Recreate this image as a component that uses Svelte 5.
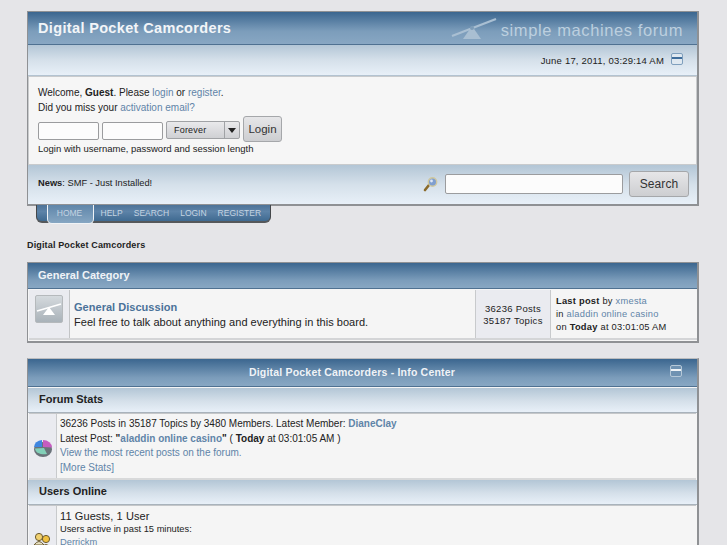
<script>
  let tabs = ['HELP', 'SEARCH', 'LOGIN', 'REGISTER']
</script>

<div class="page">
  <div class="frame head">
    <div class="titlebar">
      <h1>Digital Pocket Camcorders</h1>
      <div class="logo">
        <svg width="48" height="22" viewBox="0 0 48 22">
          <path d="M1 18 L45 1" stroke="#a9bfd2" stroke-width="2.2" fill="none" />
          <path d="M21 8 L12 21 L30 21 Z" fill="#a9bfd2" />
          <circle cx="21" cy="10" r="2" fill="#7d9cb8" />
        </svg>
        <span>simple machines forum</span>
      </div>
    </div>
    <div class="datebar">
      <span>June 17, 2011, 03:29:14 AM</span>
      <span class="collapse"></span>
    </div>
    <div class="welcome">
      <p>Welcome, <b>Guest</b>. Please <a href="#a">login</a> or <a href="#a">register</a>.</p>
      <p>Did you miss your <a href="#a">activation email?</a></p>
      <div class="loginrow">
        <span class="field short"></span>
        <span class="field short"></span>
        <span class="select">Forever<i><em></em></i></span>
        <span class="btn login">Login</span>
      </div>
      <p class="hint">Login with username, password and session length</p>
    </div>
    <div class="newsbar">
      <p><b>News</b>: SMF - Just Installed!</p>
      <div class="searchbox">
        <svg width="16" height="16" viewBox="0 0 16 16">
          <path d="M6 9 L2 14" stroke="#8a6a2a" stroke-width="2.6" stroke-linecap="round" />
          <circle cx="9.5" cy="6" r="4.2" fill="#7f9fd0" stroke="#d0c8a0" stroke-width="1.4" />
          <circle cx="8.5" cy="5" r="1.4" fill="#dfe8f6" />
        </svg>
        <span class="field wide"></span>
        <span class="btn search">Search</span>
      </div>
    </div>
  </div>

  <nav class="tabs">
    <span class="tab active">HOME</span>
    {#each tabs as t}
      <span class="tab">{t}</span>
    {/each}
  </nav>

  <div class="crumb">Digital Pocket Camcorders</div>

  <div class="frame cat">
    <div class="catbar">General Category</div>
    <div class="board">
      <div class="iconcell">
        <span class="boardicon">
          <svg width="26" height="14" viewBox="0 0 26 14">
            <path d="M1 9 L25 2" stroke="#fff" stroke-width="1.6" />
            <path d="M13 5 L7 13 L19 13 Z" fill="#fff" />
          </svg>
        </span>
      </div>
      <div class="info">
        <a href="#a" class="boardname">General Discussion</a>
        <p>Feel free to talk about anything and everything in this board.</p>
      </div>
      <div class="stats">
        <span>36236 Posts</span>
        <span>35187 Topics</span>
      </div>
      <div class="lastpost">
        <p><b>Last post</b> by <a href="#a">xmesta</a></p>
        <p>in <a href="#a">aladdin online casino</a></p>
        <p>on <b>Today</b> at 03:01:05 AM</p>
      </div>
    </div>
  </div>

  <div class="frame center">
    <div class="centerbar">
      <span>Digital Pocket Camcorders - Info Center</span>
      <span class="collapse dark"></span>
    </div>
    <div class="subbar">Forum Stats</div>
    <div class="row stat">
      <div class="side">
        <svg width="20" height="18" viewBox="0 0 20 18">
          <ellipse cx="10" cy="10.5" rx="9" ry="7.5" fill="#6a737a" />
          <path d="M10 8 L10 1 A9 7.5 0 0 1 19 8.5 Z" fill="#c65cc0" />
          <path d="M9 8 L1 8 A9 7 0 0 1 9 1 Z" fill="#3f86e0" />
          <path d="M11 9 L2 9.500 A9 6 0 0 0 14 15 Z" fill="#82d0b8" />
        </svg>
      </div>
      <div class="text">
        <p>36236 Posts in 35187 Topics by 3480 Members. Latest Member: <a href="#a"><b>DianeClay</b></a></p>
        <p>Latest Post: <b>"<a href="#a">aladdin online casino</a>"</b> ( <b>Today</b> at 03:01:05 AM )</p>
        <p><a href="#a">View the most recent posts on the forum.</a></p>
        <p><a href="#a">[More Stats]</a></p>
      </div>
    </div>
    <div class="subbar second">Users Online</div>
    <div class="row users">
      <div class="side">
        <svg width="20" height="18" viewBox="0 0 20 18">
          <circle cx="6" cy="5" r="3.600" fill="#f0d070" stroke="#6a5a30" />
          <path d="M1 13 Q6 6 11 13 Z" fill="#e8e0c0" stroke="#6a5a30" />
          <circle cx="13" cy="7" r="3.600" fill="#f0c040" stroke="#6a5a30" />
          <path d="M7 17 Q13 8 19 17 Z" fill="#d8d8d0" stroke="#6a5a30" />
        </svg>
      </div>
      <div class="text">
        <p class="big">11 Guests, 1 User</p>
        <p class="small">Users active in past 15 minutes:</p>
        <p class="small"><a href="#a">Derrickm</a></p>
      </div>
    </div>
  </div>
</div>

<style>
  :global(html), :global(body) {
    margin: 0;
    overflow: hidden;
  }

  .page {
    box-sizing: border-box;
    height: 545px;
    overflow: hidden;
    padding: 11px 28px 0 27px;
    background: #e5e5e8;
    font-family: "Liberation Sans", Arial, sans-serif;
    font-size: 10px;
    color: #222;
  }

  p {
    margin: 0;
  }

  a {
    color: #5f84a8;
    text-decoration: none;
  }

  .frame {
    border: 1px solid #8f9194;
    border-right-width: 2px;
    border-bottom-width: 2px;
    background: #f5f5f5;
  }

  .titlebar {
    display: flex;
    justify-content: space-between;
    align-items: center;
    height: 32px;
    padding: 0 14px 0 10px;
    background: linear-gradient(#3b668f, #7c9dbb 60%, #88a7c3);
    border-bottom: 1px solid #4f7191;
  }

  h1 {
    margin: 0;
    font-size: 14.500px;
    letter-spacing: 0.35px;
    color: #f2f5f8;
  }

  .logo {
    display: flex;
    align-items: center;
    gap: 2px;
    padding-top: 5px;
    color: #bccfdf;
    font-size: 16.500px;
    letter-spacing: 0.6px;
  }

  .logo svg {
    margin-top: -4px;
  }

  .datebar {
    display: flex;
    justify-content: flex-end;
    align-items: center;
    gap: 7px;
    height: 30px;
    padding-right: 14px;
    background: linear-gradient(#b3c6d6, #d5e0ea 50%, #e8f0f8);
    border-bottom: 1px solid #b3c3d1;
    font-size: 9.500px;
    letter-spacing: 0.2px;
  }

  .collapse {
    box-sizing: border-box;
    width: 12px;
    height: 12px;
    margin-top: -3px;
    border: 1px solid #7f9fbd;
    border-radius: 2px;
    background: linear-gradient(#dfe8f0 30%, #3f6d9b 30%, #3f6d9b 55%, #dfe8f0 55%);
  }

  .collapse.dark {
    margin: 0;
    background: linear-gradient(#6f92b2 35%, #eef3f7 35%, #eef3f7 55%, #6f92b2 55%);
    border-color: #b5c8d8;
  }

  .welcome {
    box-sizing: border-box;
    height: 89px;
    padding: 8px 9px 0 9px;
    border: 1px solid #c9cbcd;
    background: #f6f6f6;
    font-size: 10px;
    line-height: 15px;
  }

  .loginrow {
    display: flex;
    align-items: flex-start;
    gap: 3px;
    margin-top: 1px;
    height: 27px;
  }

  .field {
    box-sizing: border-box;
    display: block;
    margin-top: 6px;
    height: 18px;
    border: 1px solid #9b9c9e;
    border-radius: 2px;
    background: #fcfcfc;
  }

  .field.short {
    width: 61px;
  }

  .field.wide {
    width: 178px;
    height: 20px;
    margin: 0;
  }

  .select {
    box-sizing: border-box;
    display: flex;
    align-items: center;
    justify-content: space-between;
    width: 74px;
    height: 18px;
    margin-top: 5px;
    padding-left: 7px;
    border: 1px solid #a0a2a5;
    border-radius: 2px;
    background: linear-gradient(#e9e9eb, #cfd0d3);
    font-size: 9px;
    letter-spacing: 0.2px;
  }

  .select i {
    display: flex;
    align-items: center;
    justify-content: center;
    width: 14px;
    height: 100%;
    border-left: 1px solid #a0a2a5;
  }

  .select em {
    border: 4px solid transparent;
    border-top: 5px solid #222;
    border-bottom: 0;
  }

  .btn {
    box-sizing: border-box;
    display: flex;
    align-items: center;
    justify-content: center;
    border: 1px solid #a5a7aa;
    border-radius: 3px;
    background: linear-gradient(#e6e6e8, #cdced1);
    color: #333;
    font-size: 12px;
  }

  .btn.login {
    width: 39px;
    height: 26px;
    font-size: 11.500px;
  }

  .btn.search {
    width: 60px;
    height: 26px;
    letter-spacing: 0.1px;
  }

  .hint {
    margin-top: 0;
    font-size: 9.500px;
    line-height: 12px;
  }

  .newsbar {
    display: flex;
    justify-content: space-between;
    height: 39px;
    padding: 13px 8px 0 10px;
    box-sizing: border-box;
    background: linear-gradient(#b3c6d6, #d5e0ea 50%, #e8f0f8);
    font-size: 9.300px;
  }

  .searchbox {
    display: flex;
    align-items: center;
    gap: 6px;
    height: 26px;
    margin-top: -7px;
  }

  .tabs {
    display: flex;
    align-items: flex-start;
    width: 235px;
    height: 18px;
    margin: -1px 0 0 9px;
    padding-left: 10px;
    box-sizing: border-box;
    background: linear-gradient(#4d7398, #5d83a8 40%, #3f6a91);
    border: 1px solid #44474a;
    border-top: 0;
    border-bottom: 2px solid #55585b;
    border-radius: 0 0 6px 6px;
    color: #c5d4e2;
    font-size: 8.500px;
  }

  .tab {
    flex: none;
    padding: 3px 5.500px 0;
  }

  .tab.active {
    box-sizing: border-box;
    width: 47px;
    height: 19px;
    margin-right: 1px;
    padding: 3px 2px 0 0;
    text-align: center;
    background: linear-gradient(#5f86aa, #86a6c2);
    border: 1px solid #f0f3f6;
    border-top: 0;
    border-radius: 0 0 5px 5px;
  }

  .crumb {
    margin: 16px 0 11px;
    height: 12px;
    font-size: 9px;
    font-weight: bold;
    letter-spacing: 0.15px;
    line-height: 12px;
  }

  .catbar {
    box-sizing: border-box;
    height: 26px;
    padding: 0 10px;
    line-height: 25px;
    background: linear-gradient(#3b668f, #7c9dbb 70%, #88a7c3);
    border-bottom: 1px solid #4f7191;
    color: #f0f3f7;
    font-size: 11px;
    font-weight: bold;
  }

  .board {
    display: flex;
    height: 48px;
    margin: 1px 0 1px 1px;
    border-bottom: 2px solid #d4d5d7;
    font-size: 11px;
  }

  .iconcell {
    box-sizing: border-box;
    width: 41px;
    padding: 5px 0 0 6px;
    background: #eaebf0;
    border-right: 1px solid #c2c4c6;
  }

  .boardicon {
    box-sizing: border-box;
    display: flex;
    align-items: center;
    justify-content: center;
    width: 28px;
    height: 28px;
    border: 1px solid #b5b9bc;
    border-radius: 2px;
    background: linear-gradient(#d5dade, #a9b2b9);
  }

  .info {
    flex: 1;
    padding: 10px 5px 0 4px;
    line-height: 15px;
    letter-spacing: 0.03px;
  }

  .boardname {
    font-weight: bold;
    color: #4b7299;
  }

  .stats {
    display: flex;
    flex-direction: column;
    align-items: center;
    box-sizing: border-box;
    width: 76px;
    padding-top: 13px;
    background: #eaebf0;
    border-left: 1px solid #c8cacc;
    border-right: 1px solid #c8cacc;
    font-size: 9.500px;
    line-height: 12px;
    letter-spacing: 0.3px;
  }

  .lastpost {
    box-sizing: border-box;
    width: 146px;
    padding-top: 5px;
    padding-left: 5px;
    font-size: 9.300px;
    line-height: 13px;
    letter-spacing: 0.25px;
  }

  .center {
    margin-top: 15px;
    border-top-color: #bbbcbe;
  }

  .centerbar {
    position: relative;
    display: flex;
    align-items: center;
    justify-content: center;
    box-sizing: border-box;
    height: 28px;
    padding: 0 21px 2px 0;
    background: linear-gradient(#3b668f, #7c9dbb 70%, #88a7c3);
    border-bottom: 1px solid #4f7191;
    color: #f0f3f7;
    font-size: 10.500px;
    font-weight: bold;
    letter-spacing: 0.2px;
  }

  .centerbar .collapse {
    position: absolute;
    right: 15px;
    top: 6px;
  }

  .subbar {
    box-sizing: border-box;
    height: 25px;
    margin-top: 1px;
    padding-left: 11px;
    line-height: 23px;
    background: linear-gradient(#b3c6d6, #d5e0ea 55%, #e8f0f8);
    border-bottom: 1px solid #a9b3bc;
    color: #222;
    font-size: 11px;
    font-weight: bold;
  }

  .subbar.second {
    margin-top: 0;
  }

  .row {
    display: flex;
    margin: 0 1px;
    border-top: 1px solid #c5c7c9;
    font-size: 10px;
  }

  .row.stat {
    height: 64px;
    border-bottom: 2px solid #d8d9da;
  }

  .side {
    display: flex;
    align-items: center;
    justify-content: center;
    box-sizing: border-box;
    width: 28px;
    padding-top: 3px;
    background: #eaebf0;
    border-right: 1px solid #c8cacc;
  }

  .text {
    padding: 3px 0 0 3px;
    line-height: 14.500px;
  }

  .users {
    height: 60px;
  }

  .users .side {
    padding-top: 10px;
  }

  .big {
    font-size: 11px;
    letter-spacing: 0.1px;
    line-height: 14px;
  }

  .small {
    font-size: 9.300px;
    line-height: 13px;
  }
</style>
